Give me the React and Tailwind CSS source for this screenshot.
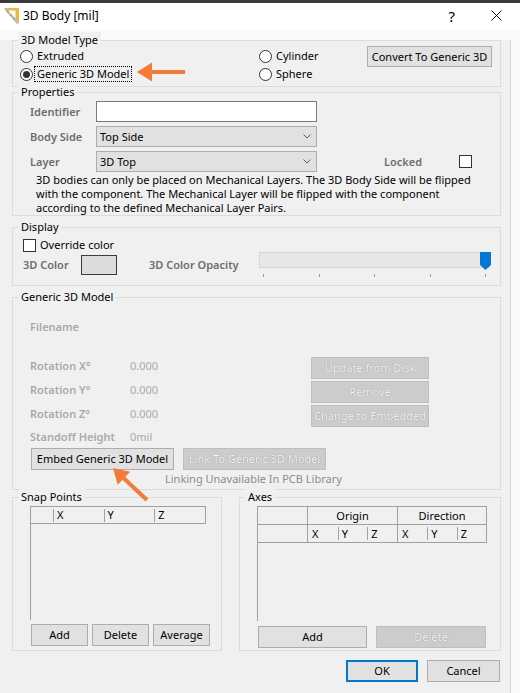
import React from 'react';

function Group({ label, className = '', children }) {
  return (
    <div className={`relative border border-[#dcdcdc] ${className}`}>
      <span className="absolute left-[5px] top-[-9px] bg-[#f0f0f0] px-[3px] leading-[16px] whitespace-nowrap">{label}</span>
      {children}
    </div>
  );
}

function Radio({ checked, label, focus }) {
  return (
    <div className="flex items-center h-[18px]">
      <span className="w-[13px] h-[13px] rounded-full border border-[#333333] bg-white flex items-center justify-center">
        {checked && <span className="w-[7px] h-[7px] rounded-full bg-[#333333]" />}
      </span>
      {focus ? (
        <span className="ml-[1px] px-[2px] border border-dotted border-black leading-[14px] whitespace-nowrap">{label}</span>
      ) : (
        <span className="ml-[4px] whitespace-nowrap">{label}</span>
      )}
    </div>
  );
}

function Btn({ children, className = '', disabled }) {
  return (
    <button
      className={`flex items-center justify-center border whitespace-nowrap ${
        disabled
          ? 'bg-[#cccccc] border-[#bfbfbf] text-[#f6f6f6] [text-shadow:0_0_1px_#7d7d7d]'
          : 'bg-[#e1e1e1] border-[#adadad] text-black'
      } ${className}`}
    >
      {children}
    </button>
  );
}

function Chevron() {
  return (
    <svg width="8" height="5" viewBox="0 0 8 5" className="mr-[5px]">
      <polyline points="0.5,0.5 4,4 7.5,0.5" fill="none" stroke="#606060" strokeWidth="1" />
    </svg>
  );
}

function Select({ value }) {
  return (
    <div className="w-[221px] h-[21px] bg-[#e1e1e1] border border-[#adadad] flex items-center justify-between pl-[3px]">
      <span>{value}</span>
      <Chevron />
    </div>
  );
}

function Check() {
  return <span className="w-[13px] h-[13px] border border-[#333333] bg-white" />;
}

function TitleIcon() {
  return (
    <svg width="17" height="19" viewBox="0 0 17 19">
      <polygon points="1,2 16,2 16,17" fill="#e9b93a" />
      <polygon points="4.5,4.5 12.5,4.5 12.5,12.5" fill="#ffffff" />
      <polygon points="1,3 3,2 16,17 14,18" fill="#b9b9b9" />
      <line x1="4" y1="6.5" x2="5.5" y2="5.2" stroke="#7d7d7d" strokeWidth="0.8" />
      <line x1="7" y1="10" x2="8.5" y2="8.7" stroke="#7d7d7d" strokeWidth="0.8" />
      <line x1="10" y1="13.5" x2="11.5" y2="12.2" stroke="#7d7d7d" strokeWidth="0.8" />
    </svg>
  );
}

export default function App() {
  const lbl = 'font-semibold text-[#6d6d6d]';
  const dis = 'font-semibold text-[#a9a9a9]';
  return (
    <div className="relative w-[520px] h-[693px] overflow-hidden bg-[#fafafa] text-[11px] leading-[16px] text-black font-['Noto_Sans',sans-serif]">
      <div className="h-[3px] bg-[#3b3b3b]" />
      <div className="h-[27px] bg-white flex items-center pb-[2px] text-[12px]">
        <span className="ml-[3px]"><TitleIcon /></span>
        <span className="ml-[3px]">3D Body [mil]</span>
        <span className="ml-auto text-[15px] mr-[36px]">?</span>
        <svg width="11" height="11" viewBox="0 0 11 11" className="mr-[18px]">
          <path d="M0.5 0.5 L10.5 10.5 M10.5 0.5 L0.5 10.5" stroke="#111" strokeWidth="1" />
        </svg>
      </div>

      <div className="w-[511px] h-[658px] bg-[#f0f0f0] border-r border-b border-[#d4d4d4] pl-[12px]">
        {/* 3D Model Type */}
        <Group label="3D Model Type" className="mt-[10px] w-[489px] h-[47px]">
          <div className="flex items-start">
            <div className="w-[246px] pl-[7px] mt-[6px]">
              <Radio label="Extruded" />
              <Radio label="Generic 3D Model" checked focus />
            </div>
            <div className="w-[108px] mt-[6px]">
              <Radio label="Cylinder" />
              <Radio label="Sphere" />
            </div>
            <Btn className="mt-[5px] w-[125px] h-[21px]">Convert To Generic 3D</Btn>
          </div>
        </Group>

        {/* Properties */}
        <Group label="Properties" className="mt-[5px] w-[489px] h-[124px]">
          <div className="pt-[8px] flex flex-col gap-[4px]">
            <div className="flex items-center h-[21px] pl-[17px]">
              <span className={`w-[66px] ${lbl}`}>Identifier</span>
              <div className="w-[221px] h-[21px] bg-white border border-[#7a7a7a]" />
            </div>
            <div className="flex items-center h-[21px] pl-[17px]">
              <span className={`w-[66px] ${lbl}`}>Body Side</span>
              <Select value="Top Side" />
            </div>
            <div className="flex items-center h-[21px] pl-[17px]">
              <span className={`w-[66px] ${lbl}`}>Layer</span>
              <Select value="3D Top" />
              <span className={`ml-[67px] w-[75px] ${lbl}`}>Locked</span>
              <Check />
            </div>
          </div>
          <p className="mt-[1px] pl-[23px] leading-[14px] whitespace-nowrap">
            3D bodies can only be placed on Mechanical Layers. The 3D Body Side will be flipped<br />
            with the component. The Mechanical Layer will be flipped with the component<br />
            according to the defined Mechanical Layer Pairs.
          </p>
        </Group>

        {/* Display */}
        <Group label="Display" className="mt-[11px] w-[489px] h-[59px]">
          <div className="mt-[9px] h-[16px] pl-[10px] flex items-center">
            <Check />
            <span className="ml-[4px]">Override color</span>
          </div>
          <div className="mt-[2px] h-[20px] pl-[10px] flex items-center">
            <span className={`w-[58px] ${lbl}`}>3D Color</span>
            <div className="w-[36px] h-[20px] bg-[#dcdcdc] border border-[#3c3c3c]" />
            <span className={`ml-[32px] w-[110px] ${lbl}`}>3D Color Opacity</span>
            <div className="self-start -mt-[3px]">
              <div className="relative w-[231px] h-[16px] bg-[#e7e7e7] border border-[#d6d6d6]">
                <svg width="11" height="18" viewBox="0 0 11 18" className="absolute left-[220px] top-[-1px]">
                  <path d="M0 0 H11 V13 L5.5 18 L0 13 Z" fill="#0078d7" />
                </svg>
              </div>
              <div className="mt-[6px] w-[231px] h-[3px] px-[4px] flex justify-between">
                <span className="w-[1px] h-[3px] bg-[#9a9a9a]" />
                <span className="w-[1px] h-[3px] bg-[#9a9a9a]" />
                <span className="w-[1px] h-[3px] bg-[#9a9a9a]" />
                <span className="w-[1px] h-[3px] bg-[#9a9a9a]" />
                <span className="w-[1px] h-[3px] bg-[#9a9a9a]" />
              </div>
            </div>
          </div>
        </Group>

        {/* Generic 3D Model */}
        <Group label="Generic 3D Model" className="mt-[11px] w-[489px] h-[193px]">
          <div className={`mt-[21px] h-[16px] pl-[17px] ${dis}`}>Filename</div>
          <div className="mt-[20px] flex items-start">
            <div className="w-[298px] pl-[17px] flex flex-col gap-[2px]">
              {[
                ['Rotation X°', '0.000'],
                ['Rotation Y°', '0.000'],
                ['Rotation Z°', '0.000'],
              ].map(([k, v]) => (
                <div key={k} className="h-[22px] flex items-center">
                  <span className={`w-[100px] ${dis}`}>{k}</span>
                  <span className="text-[#a9a9a9]">{v}</span>
                </div>
              ))}
              <div className="h-[20px] flex items-center">
                <span className={`w-[100px] ${dis}`}>Standoff Height</span>
                <span className="text-[#a9a9a9]">0mil</span>
              </div>
            </div>
            <div className="mt-[2px] flex flex-col gap-[2px]">
              <Btn disabled className="w-[118px] h-[22px]">Update from Disk</Btn>
              <Btn disabled className="w-[118px] h-[22px]">Remove</Btn>
              <Btn disabled className="w-[118px] h-[22px]">Change to Embedded</Btn>
            </div>
          </div>
          <div className="mt-[1px] pl-[18px] flex gap-[9px]">
            <Btn className="w-[143px] h-[22px]">Embed Generic 3D Model</Btn>
            <Btn disabled className="w-[143px] h-[22px]">Link To Generic 3D Model</Btn>
          </div>
          <div className="mt-[2px] h-[14px] leading-[14px] pl-[152px] text-[#8c8c8c]">Linking Unavailable In PCB Library</div>
        </Group>

        {/* Snap Points / Axes */}
        <div className="mt-[7px] flex gap-[17px]">
          <Group label="Snap Points" className="w-[210px] h-[154px]">
            <div className="mt-[8px] ml-[17px] w-[176px]">
              <div className="h-[18px] flex bg-[#f0f0f0] border border-[#a0a0a0]">
                <div className="w-[22px] h-full" />
                {['X', 'Y', 'Z'].map((c) => (
                  <div key={c} className="w-[51px] h-full flex items-center">
                    <span className="w-[1px] h-[13px] bg-[#a0a0a0]" />
                    <span className="ml-[3px]">{c}</span>
                  </div>
                ))}
              </div>
              <div className="h-[96px] border-l border-[#a0a0a0]" />
            </div>
            <div className="mt-[4px] ml-[18px] flex gap-[4px]">
              <Btn className="w-[57px] h-[22px]">Add</Btn>
              <Btn className="w-[57px] h-[22px]">Delete</Btn>
              <Btn className="w-[57px] h-[22px]">Average</Btn>
            </div>
          </Group>

          <Group label="Axes" className="w-[262px] h-[154px]">
            <div className="mt-[8px] ml-[17px] w-[230px]">
              <div className="flex border border-[#a0a0a0] bg-[#f0f0f0]">
                <div className="w-[49px] flex flex-col">
                  <div className="h-[18px] border-b border-[#a0a0a0]" />
                  <div className="h-[17px]" />
                </div>
                {[['Origin', 'w-[90px]'], ['Direction', 'w-[89px]']].map(([g, w]) => (
                  <div key={g} className={`${w} flex flex-col border-l border-[#a0a0a0]`}>
                    <div className="h-[18px] flex items-center justify-center border-b border-[#a0a0a0]">{g}</div>
                    <div className="h-[17px] flex">
                      {['X', 'Y', 'Z'].map((c, i) => (
                        <div key={c} className="w-[30px] h-full flex items-center">
                          {i > 0 && <span className="w-[1px] h-[13px] bg-[#a0a0a0]" />}
                          <span className={i > 0 ? 'ml-[3px]' : 'ml-[4px]'}>{c}</span>
                        </div>
                      ))}
                    </div>
                  </div>
                ))}
              </div>
              <div className="h-[78px] border-l border-[#a0a0a0]" />
            </div>
            <div className="mt-[5px] ml-[18px] flex gap-[9px]">
              <Btn className="w-[109px] h-[22px]">Add</Btn>
              <Btn disabled className="w-[110px] h-[22px]">Delete</Btn>
            </div>
          </Group>
        </div>

        {/* OK / Cancel */}
        <div className="mt-[9px] pl-[334px] flex gap-[9px]">
          <button className="w-[72px] h-[22px] bg-[#e1e1e1] border-2 border-[#0078d7]">OK</button>
          <button className="w-[73px] h-[22px] bg-[#e1e1e1] border border-[#adadad]">Cancel</button>
        </div>
      </div>

      {/* annotation arrows */}
      <svg className="absolute left-0 top-0 pointer-events-none" width="520" height="693" viewBox="0 0 520 693">
        <line x1="150" y1="72" x2="185" y2="72" stroke="#f47b35" strokeWidth="4" />
        <polygon points="137,72 152,62.5 152,81.5" fill="#f47b35" />
        <line x1="123" y1="477.5" x2="147" y2="500" stroke="#f47b35" strokeWidth="4" />
        <polygon points="113,468 130.1,471.8 117.7,484.8" fill="#f47b35" />
      </svg>
    </div>
  );
}
